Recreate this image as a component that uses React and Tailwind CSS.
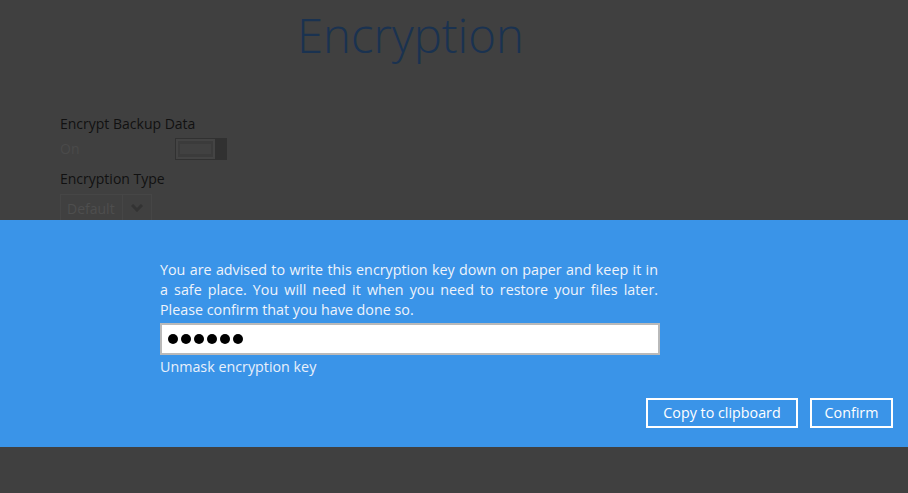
export default function App() {
  return (
    <div
      className="w-[908px] h-[493px] bg-[#404040] flex flex-col overflow-hidden"
      style={{ fontFamily: '"Open Sans", "Noto Sans", sans-serif' }}
    >
      <div className="h-[220px] relative overflow-hidden">
        <h1 className="absolute left-[297px] top-[5px] text-[47.3px] font-light text-[#1a3250] leading-none pt-[6px]">
          Encryption
        </h1>
        <div className="pt-[114px] pl-[60px] text-[14px] leading-[20px]">
          <div className="text-[#111]">Encrypt Backup Data</div>
          <div className="flex items-center mt-[4px] h-[22px]">
            <span className="w-[115px] text-[#4a4a4a]">On</span>
            <div className="w-[52px] h-[22px] bg-[#313131] flex items-center pl-[1px]">
              <div className="w-[39px] h-[20px] border-2 border-[#444] bg-[#3b3b3b] flex items-center justify-center">
                <div className="w-[31px] h-[10px] bg-[#414141]" />
              </div>
            </div>
          </div>
          <div className="text-[#111] mt-[9px]">Encryption Type</div>
          <div className="mt-[5px] flex w-[92px] h-[28px] border border-[#464646]">
            <span className="flex-1 pl-[6px] pt-[4px] text-[#4e4e4e]">Default</span>
            <span className="w-[29px] border-l border-[#464646] flex justify-center pt-[9px]">
              <svg width="12" height="8" viewBox="0 0 12 8">
                <path d="M1 1l5 5 5-5" stroke="#333" strokeWidth="3" fill="none" />
              </svg>
            </span>
          </div>
        </div>
      </div>
      <div className="h-[227px] bg-[#3a94e8] relative">
        <div className="pl-[160px] pt-[40px]">
          <div className="text-[14.3px] leading-[20px] text-[#eef3fb] w-[498px]">
            <div className="text-justify [text-align-last:justify]">
              You are advised to write this encryption key down on paper and keep it in
            </div>
            <div className="text-justify [text-align-last:justify]">
              a safe place. You will need it when you need to restore your files later.
            </div>
            <div>Please confirm that you have done so.</div>
          </div>
          <div className="mt-[3px] w-[500px] h-[32px] bg-white border-2 border-[#b9b9b9] flex items-center pl-[6px] gap-[3px]">
            {[0, 1, 2, 3, 4, 5].map((i) => (
              <span key={i} className="w-[10px] h-[10px] rounded-full bg-black" />
            ))}
          </div>
          <div className="mt-[2px] text-[14.3px] leading-[20px] text-[#e8f0fb]">Unmask encryption key</div>
        </div>
        <div className="absolute right-[15px] top-[178px] flex gap-[12px]">
          <button className="w-[152px] h-[30px] border-2 border-white text-white text-[14.3px]">Copy to clipboard</button>
          <button className="w-[83px] h-[30px] border-2 border-white text-white text-[14.3px]">Confirm</button>
        </div>
      </div>
      <div className="flex-1" />
    </div>
  );
}
